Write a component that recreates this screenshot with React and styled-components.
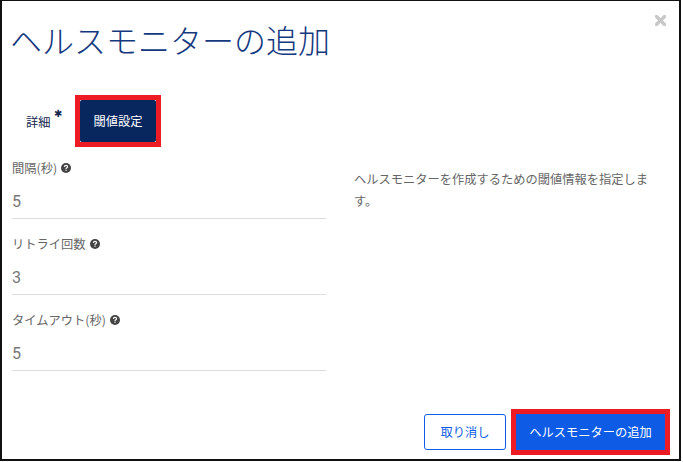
import React from 'react';
import styled, { createGlobalStyle } from 'styled-components';

const GlobalStyle = createGlobalStyle`
  html, body {
    margin: 0;
    padding: 0;
    background: #ffffff;
  }
  body {
    font-family: "Noto Sans CJK JP", "Noto Sans", sans-serif;
  }
`;

const Modal = styled.div`
  box-sizing: border-box;
  width: 681px;
  height: 461px;
  border: 2px solid #111111;
  border-top-width: 1px;
  background: #ffffff;
  display: flex;
  flex-direction: column;
  position: relative;
`;

const Close = styled.svg`
  position: absolute;
  top: 14px;
  right: 13px;
  width: 11px;
  height: 11px;
`;

const Title = styled.h1`
  margin: 18px 0 0 8px;
  font-size: 32px;
  line-height: 40px;
  font-weight: 300;
  color: #14397f;
`;

const Tabs = styled.div`
  display: flex;
  align-items: center;
  margin: 36px 0 0 24px;
`;

const PlainTab = styled.div`
  width: 49px;
  font-size: 12.25px;
  color: #14284f;
  position: relative;
  top: 1px;
`;

const Required = styled.span`
  position: absolute;
  top: -5px;
  left: 28px;
  font-family: "DejaVu Sans", sans-serif;
  font-size: 10px;
  font-weight: 700;
  line-height: 12px;
  color: #14284f;
`;

const ActiveFrame = styled.div`
  border: 5px solid #ed1c24;
  background: #ffffff;
`;

const ActiveTab = styled.div`
  width: 76px;
  height: 42px;
  border-radius: 2px;
  background: #08275f;
  color: #ffffff;
  font-size: 12.25px;
  display: flex;
  align-items: center;
  justify-content: center;
`;

const Body = styled.div`
  display: flex;
  margin-top: 12px;
  flex: 1;
`;

const Form = styled.div`
  width: 314px;
  margin-left: 10px;
  display: flex;
  flex-direction: column;
  gap: 16px;
`;

const Field = styled.div`
  display: flex;
  flex-direction: column;
`;

const Label = styled.div`
  display: flex;
  align-items: center;
  gap: 4px;
  height: 18px;
  font-size: 12.25px;
  color: #666666;
`;

const Value = styled.div`
  height: 42px;
  box-sizing: border-box;
  padding-top: 15px;
  font-family: "Roboto", sans-serif;
  font-size: 16px;
  line-height: 20px;
  color: #777777;
  border-bottom: 1px solid #dddddd;
`;

const Help = styled.p`
  margin: 9px 0 0 28px;
  width: 300px;
  font-size: 12.25px;
  line-height: 22px;
  color: #666666;
`;

const Footer = styled.div`
  display: flex;
  justify-content: flex-end;
  align-items: center;
  gap: 5px;
  padding: 0 9px 4px 0;
`;

const CancelButton = styled.button`
  width: 82px;
  height: 36px;
  border: 1px solid #0e5ce6;
  border-radius: 3px;
  background: #ffffff;
  color: #0e5ce6;
  font-family: inherit;
  font-size: 12.25px;
  padding: 0;
`;

const SubmitFrame = styled.div`
  border: 5px solid #ed1c24;
`;

const SubmitButton = styled.button`
  display: block;
  width: 149px;
  height: 36px;
  border: 0;
  background: #0e5ce6;
  color: #ffffff;
  font-family: inherit;
  font-size: 12.25px;
  padding: 0;
`;

const HelpIcon = () => (
  <svg width="10" height="10" viewBox="0 0 10 10">
    <circle cx="5" cy="5" r="5" fill="#444444" />
    <path d="M3.4 3.9C3.5 2.9 4.2 2.4 5 2.4C5.9 2.4 6.6 3 6.6 3.7C6.6 4.8 5 4.8 5 5.9" fill="none" stroke="#ffffff" strokeWidth="1.2" />
    <rect x="4.4" y="6.6" width="1.2" height="1.2" fill="#ffffff" />
  </svg>
);

const fields = [
  { label: '間隔(秒)', value: '5' },
  { label: 'リトライ回数', value: '3' },
  { label: 'タイムアウト(秒)', value: '5' },
];

export default function App() {
  return (
    <>
      <GlobalStyle />
      <Modal>
        <Close viewBox="0 0 11 11">
          <path d="M1.5 1.5L9.5 9.5M9.5 1.5L1.5 9.5" stroke="#c8c8c8" strokeWidth="3.4" strokeLinecap="round" />
        </Close>
        <Title>ヘルスモニターの追加</Title>
        <Tabs>
          <PlainTab>詳細<Required>✱</Required></PlainTab>
          <ActiveFrame>
            <ActiveTab>閾値設定</ActiveTab>
          </ActiveFrame>
        </Tabs>
        <Body>
          <Form>
            {fields.map((f) => (
              <Field key={f.label}>
                <Label>{f.label}<HelpIcon /></Label>
                <Value>{f.value}</Value>
              </Field>
            ))}
          </Form>
          <Help>ヘルスモニターを作成するための閾値情報を指定します。</Help>
        </Body>
        <Footer>
          <CancelButton>取り消し</CancelButton>
          <SubmitFrame>
            <SubmitButton>ヘルスモニターの追加</SubmitButton>
          </SubmitFrame>
        </Footer>
      </Modal>
    </>
  );
}
